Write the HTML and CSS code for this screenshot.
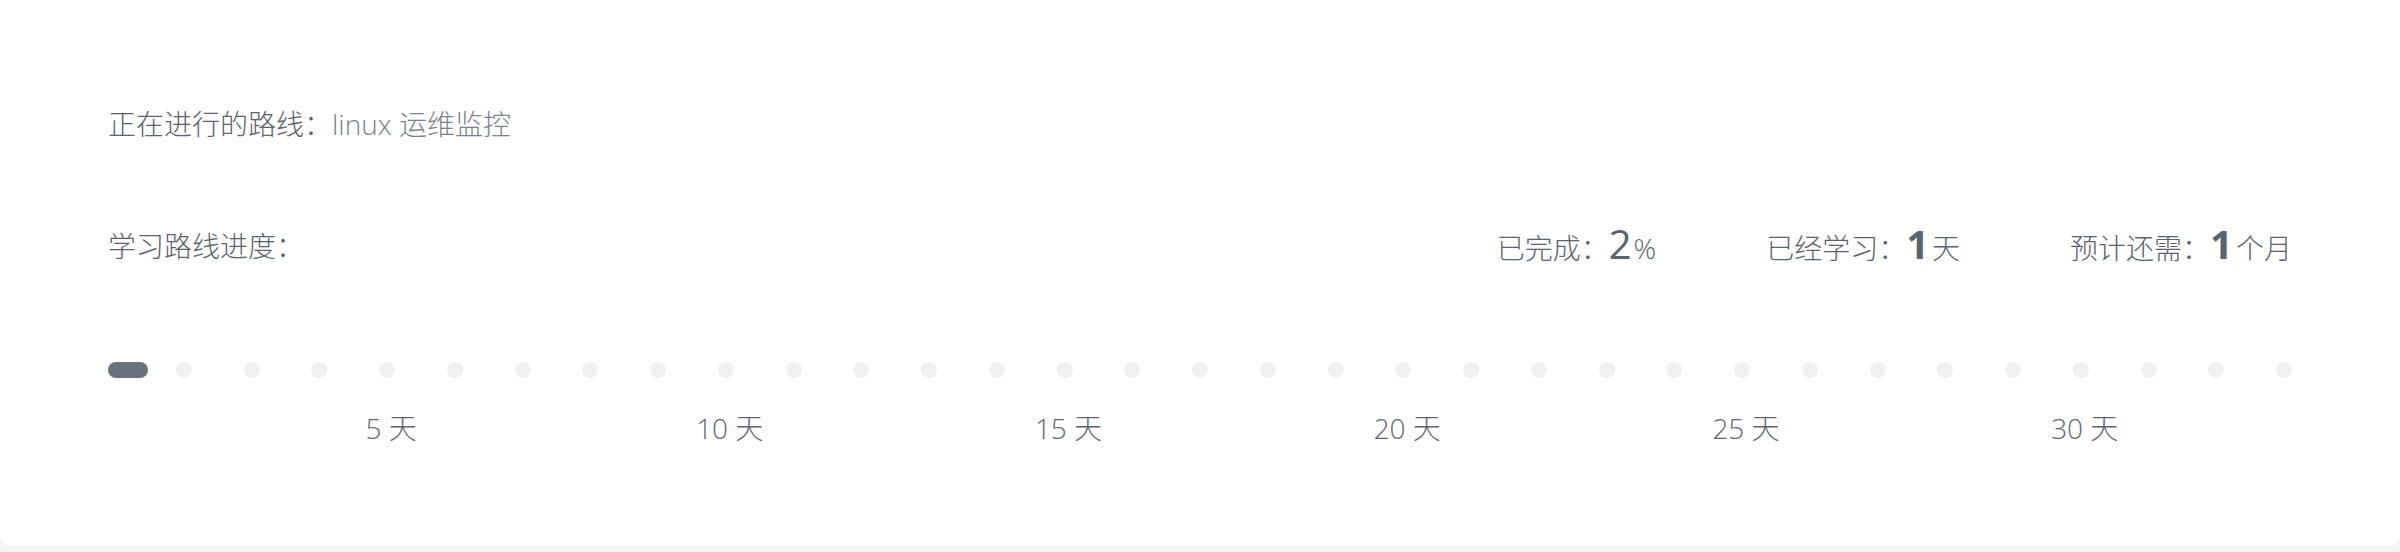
FILE: index.html
```html
<!DOCTYPE html>
<html lang="zh-CN">
<head>
<meta charset="utf-8">
<title>学习路线进度</title>
<link rel="stylesheet" href="styles.css">
</head>
<body>
<div class="card">
  <div class="row route">
    <span class="label">正在进行的路线：</span><span class="route-name">linux 运维监控</span>
  </div>
  <div class="row progress">
    <span class="label">学习路线进度：</span>
    <div class="stats">
      <div class="stat"><span class="label">已完成：</span><span class="num light">2</span><span class="unit">%</span></div>
      <div class="stat"><span class="label">已经学习：</span><span class="num">1</span><span class="unit">天</span></div>
      <div class="stat"><span class="label">预计还需：</span><span class="num">1</span><span class="unit">个月</span></div>
    </div>
  </div>
  <div class="track">
    <div class="step"><span class="dot active"></span></div>
    <div class="step"><span class="dot"></span></div>
    <div class="step"><span class="dot"></span></div>
    <div class="step"><span class="dot"></span></div>
    <div class="step"><span class="dot"></span><span class="day">5 天</span></div>
    <div class="step"><span class="dot"></span></div>
    <div class="step"><span class="dot"></span></div>
    <div class="step"><span class="dot"></span></div>
    <div class="step"><span class="dot"></span></div>
    <div class="step"><span class="dot"></span><span class="day">10 天</span></div>
    <div class="step"><span class="dot"></span></div>
    <div class="step"><span class="dot"></span></div>
    <div class="step"><span class="dot"></span></div>
    <div class="step"><span class="dot"></span></div>
    <div class="step"><span class="dot"></span><span class="day">15 天</span></div>
    <div class="step"><span class="dot"></span></div>
    <div class="step"><span class="dot"></span></div>
    <div class="step"><span class="dot"></span></div>
    <div class="step"><span class="dot"></span></div>
    <div class="step"><span class="dot"></span><span class="day">20 天</span></div>
    <div class="step"><span class="dot"></span></div>
    <div class="step"><span class="dot"></span></div>
    <div class="step"><span class="dot"></span></div>
    <div class="step"><span class="dot"></span></div>
    <div class="step"><span class="dot"></span><span class="day">25 天</span></div>
    <div class="step"><span class="dot"></span></div>
    <div class="step"><span class="dot"></span></div>
    <div class="step"><span class="dot"></span></div>
    <div class="step"><span class="dot"></span></div>
    <div class="step"><span class="dot"></span><span class="day">30 天</span></div>
    <div class="step"><span class="dot"></span></div>
    <div class="step"><span class="dot"></span></div>
    <div class="step"><span class="dot"></span></div>
  </div>
</div>
</body>
</html>
```

FILE: styles.css
```css
* { box-sizing: border-box; }

html, body {
  margin: 0;
  padding: 0;
  background: #f5f5f5;
}

body {
  font-family: "Open Sans", "Noto Sans CJK SC", sans-serif;
  font-weight: 300;
  color: #5b636e;
  font-size: 28px;
}

.card {
  background: #ffffff;
  height: 546px;
  border-radius: 0 0 12px 12px;
  padding: 104px 108px 0 108px;
}

.row {
  height: 40px;
  line-height: 40px;
  display: flex;
  align-items: center;
}

.label {
  white-space: nowrap;
}

.route-name {
  color: #7b838d;
}

.progress {
  margin-top: 82px;
  justify-content: space-between;
}

.stats {
  display: flex;
  align-items: center;
  gap: 110px;
}

.stat {
  display: flex;
  align-items: baseline;
}

.num {
  font-family: "Open Sans", "Noto Sans", sans-serif;
  font-weight: 700;
  font-size: 40px;
  letter-spacing: -2px;
  color: #5b636e;
  margin-right: 5px;
}

.num.light {
  font-weight: 400;
  letter-spacing: 0;
  margin-right: 2px;
}

.unit {
  white-space: nowrap;
}

.track {
  margin-top: 96px;
  display: grid;
  grid-template-columns: repeat(32, 1fr) 16px;
}

.step {
  display: flex;
  flex-direction: column;
  align-items: flex-start;
}

.dot {
  display: block;
  width: 16px;
  height: 16px;
  border-radius: 8px;
  background: #eff0f2;
}

.dot.active {
  width: 40px;
  background: #6b7380;
}

.day {
  width: 16px;
  margin-top: 35px;
  height: 30px;
  line-height: 30px;
  display: flex;
  justify-content: center;
  white-space: nowrap;
  color: #5f6771;
  padding-left: 8px;
}
```
